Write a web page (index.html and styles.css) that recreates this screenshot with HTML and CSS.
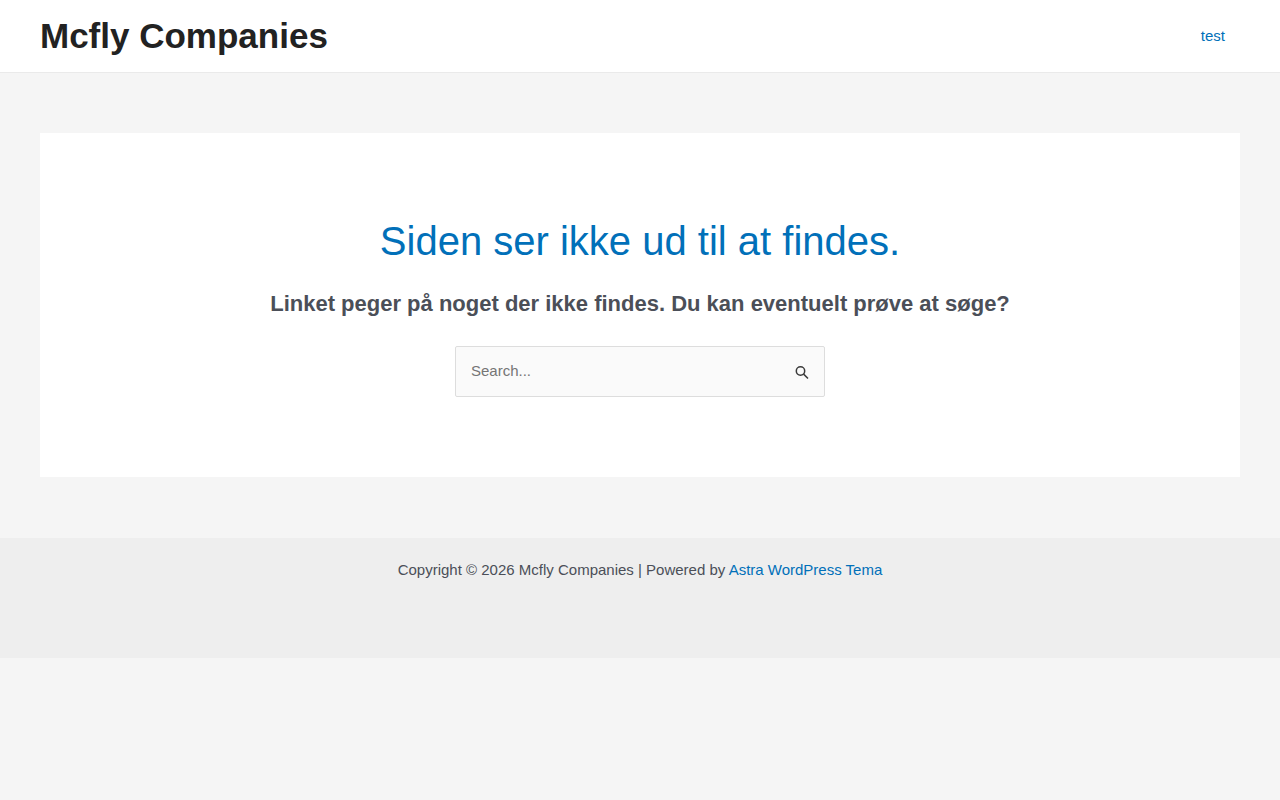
FILE: index.html
```html
<!DOCTYPE html>
<html lang="da-DK">

<head>
    <meta charset="UTF-8">
    <meta name="viewport" content="width=device-width, initial-scale=1">
    <title>Siden blev ikke fundet - Mcfly Companies</title>
    <link rel="stylesheet" href="styles.css">
</head>

<body>
    <header class="site-header">
        <div class="container header-inner">
            <p class="site-title"><a href="#">Mcfly Companies</a></p>
            <nav class="main-nav">
                <a class="menu-link" href="#">test</a>
            </nav>
        </div>
    </header>

    <main class="container site-content">
        <section class="error-404">
            <h1 class="page-title">Siden ser ikke ud til at findes.</h1>
            <div class="page-sub-title">Linket peger på noget der ikke findes. Du kan eventuelt prøve at søge?</div>
            <form class="search-form" role="search" action="#">
                <input class="search-field" type="search" name="s" placeholder="Search..." aria-label="Search">
                <button class="search-submit" type="submit" aria-label="Search">
                    <svg class="search-icon" viewBox="0 0 15 15">
                        <circle cx="6.5" cy="6" r="4.2" />
                        <path d="M9.6 9.1 L14 13.5" />
                    </svg>
                </button>
            </form>
        </section>
    </main>

    <footer class="site-footer">
        <div class="container">
            <p class="copyright">Copyright © 2026 Mcfly Companies | Powered by <a href="#">Astra WordPress Tema</a></p>
        </div>
    </footer>
</body>

</html>
```
FILE: styles.css
```css
* {
    box-sizing: border-box;
}

body {
    margin: 0;
    background-color: #f5f5f5;
    color: #4b4f58;
    font-family: "Liberation Sans", Arial, sans-serif;
    font-size: 15px;
    line-height: 24px;
}

a {
    color: #0170b9;
    text-decoration: none;
}

.container {
    max-width: 1240px;
    margin: 0 auto;
    padding: 0 20px;
}

/* Header */
.site-header {
    background-color: #fff;
    border-bottom: 1px solid #eaeaea;
}

.header-inner {
    display: flex;
    align-items: center;
    justify-content: space-between;
    min-height: 72px;
}

.site-title {
    margin: 0;
    font-size: 35px;
    font-weight: bold;
    line-height: 42px;
}

.site-title a {
    color: #222;
}

.menu-link {
    display: block;
    padding: 0 15px;
}

/* 404 content */
.site-content {
    padding-top: 60px;
    padding-bottom: 61px;
}

.error-404 {
    padding: 80px;
    background-color: #fff;
    text-align: center;
}

.page-title {
    margin: 0 0 16px;
    color: #0170b9;
    font-size: 40px;
    font-weight: normal;
    line-height: 56px;
}

.page-sub-title {
    margin-bottom: 24px;
    font-size: 22px;
    font-weight: bold;
    line-height: 37px;
}

.search-form {
    display: flex;
    max-width: 370px;
    margin: 0 auto;
    background-color: #fafafa;
    border: 1px solid #ddd;
    border-radius: 2px;
}

.search-field {
    flex: 1;
    min-width: 0;
    height: 49px;
    padding: 0 15px 2px;
    background: transparent;
    border: 0;
    color: #666;
    font: inherit;
    outline: none;
}

.search-field::placeholder {
    color: #757575;
}

.search-submit {
    display: flex;
    align-items: center;
    padding: 2px 15px 0;
    background: transparent;
    border: 0;
    cursor: pointer;
}

.search-icon {
    width: 15px;
    height: 15px;
    fill: none;
    stroke: #3a3a3a;
    stroke-width: 1.5;
}

/* Footer */
.site-footer {
    min-height: 120px;
    padding: 20px 0;
    background-color: #eee;
    text-align: center;
}

.copyright {
    margin: 0;
}
```
